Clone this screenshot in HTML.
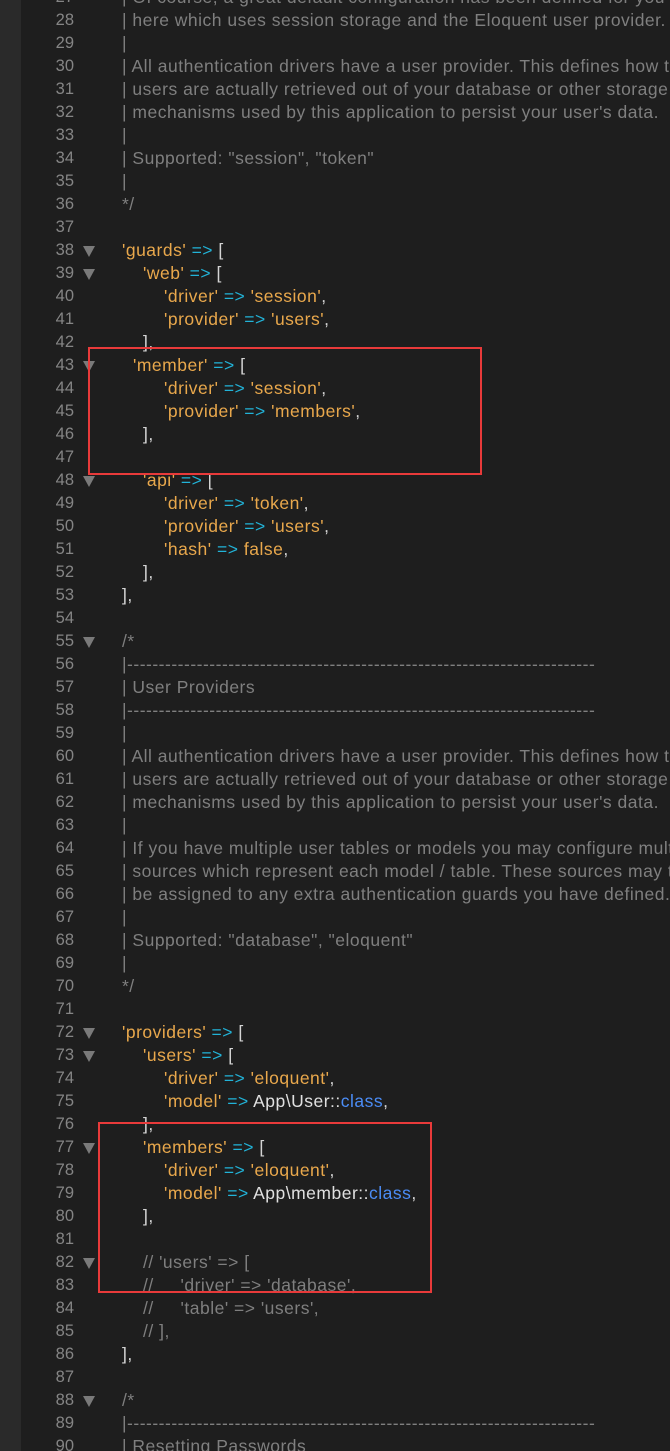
<!DOCTYPE html>
<html><head><meta charset="utf-8"><style>
html,body{overflow:hidden}
body{margin:0;width:670px;height:1451px;background:#1e1e1e;position:relative;font-family:"Liberation Sans",sans-serif;font-size:17.5px;letter-spacing:0.5px}
.g{position:absolute;left:0;top:0;width:21px;height:1451px;background:#2a2a2a}
.l{position:absolute;left:0;height:23px;line-height:23px;white-space:pre;width:670px;overflow:hidden}
.n{position:absolute;right:596px;color:#858585;text-align:right;font-size:16.5px;letter-spacing:0}
.f{position:absolute;left:83px;top:7px;width:0;height:0;border-left:6px solid transparent;border-right:6px solid transparent;border-top:11px solid #7a7a7a}
.c{position:absolute;color:#7f7f7f}
.s{color:#e9a84c}.o{color:#22b3d8}.p{color:#d4d4d4}.k{color:#4b8cf5}.w{color:#e0e0e0}
.box{position:absolute;border:2px solid #e83a3a}
</style></head><body>
<div class="g"></div>
<div id="c"></div>
<div class="box" style="left:88px;top:347px;width:390px;height:124px"></div>
<div class="box" style="left:98px;top:1122px;width:330px;height:167px"></div>
<script>
const L={
27:[0,'c','| Of course, a great default configuration has been defined for you'],
28:[0,'c','| here which uses session storage and the Eloquent user provider.'],
29:[0,'c','|'],
30:[0,'c','| All authentication drivers have a user provider. This defines how the'],
31:[0,'c','| users are actually retrieved out of your database or other storage'],
32:[0,'c','| mechanisms used by this application to persist your user\'s data.'],
33:[0,'c','|'],34:[0,'c','| Supported: "session", "token"'],35:[0,'c','|'],36:[0,'c','*/'],
38:[0,'h',"<span class=s>'guards'</span> <span class=o>=&gt;</span> <span class=p>[</span>"],
39:[21,'h',"<span class=s>'web'</span> <span class=o>=&gt;</span> <span class=p>[</span>"],
40:[42,'h',"<span class=s>'driver'</span> <span class=o>=&gt;</span> <span class=s>'session'</span><span class=p>,</span>"],
41:[42,'h',"<span class=s>'provider'</span> <span class=o>=&gt;</span> <span class=s>'users'</span><span class=p>,</span>"],
42:[21,'h',"<span class=p>],</span>"],
43:[11,'h',"<span class=s>'member'</span> <span class=o>=&gt;</span> <span class=p>[</span>"],
44:[42,'h',"<span class=s>'driver'</span> <span class=o>=&gt;</span> <span class=s>'session'</span><span class=p>,</span>"],
45:[42,'h',"<span class=s>'provider'</span> <span class=o>=&gt;</span> <span class=s>'members'</span><span class=p>,</span>"],
46:[21,'h',"<span class=p>],</span>"],
48:[21,'h',"<span class=s>'api'</span> <span class=o>=&gt;</span> <span class=p>[</span>"],
49:[42,'h',"<span class=s>'driver'</span> <span class=o>=&gt;</span> <span class=s>'token'</span><span class=p>,</span>"],
50:[42,'h',"<span class=s>'provider'</span> <span class=o>=&gt;</span> <span class=s>'users'</span><span class=p>,</span>"],
51:[42,'h',"<span class=s>'hash'</span> <span class=o>=&gt;</span> <span class=s>false</span><span class=p>,</span>"],
52:[21,'h',"<span class=p>],</span>"],53:[0,'h',"<span class=p>],</span>"],
55:[0,'c','/*'],56:[0,'c','|'+'-'.repeat(74)],57:[0,'c','| User Providers'],58:[0,'c','|'+'-'.repeat(74)],59:[0,'c','|'],
60:[0,'c','| All authentication drivers have a user provider. This defines how the'],
61:[0,'c','| users are actually retrieved out of your database or other storage'],
62:[0,'c','| mechanisms used by this application to persist your user\'s data.'],
63:[0,'c','|'],
64:[0,'c','| If you have multiple user tables or models you may configure multiple'],
65:[0,'c','| sources which represent each model / table. These sources may then'],
66:[0,'c','| be assigned to any extra authentication guards you have defined.'],
67:[0,'c','|'],68:[0,'c','| Supported: "database", "eloquent"'],69:[0,'c','|'],70:[0,'c','*/'],
72:[0,'h',"<span class=s>'providers'</span> <span class=o>=&gt;</span> <span class=p>[</span>"],
73:[21,'h',"<span class=s>'users'</span> <span class=o>=&gt;</span> <span class=p>[</span>"],
74:[42,'h',"<span class=s>'driver'</span> <span class=o>=&gt;</span> <span class=s>'eloquent'</span><span class=p>,</span>"],
75:[42,'h',"<span class=s>'model'</span> <span class=o>=&gt;</span> <span class=w>App\\User::</span><span class=k>class</span><span class=p>,</span>"],
76:[21,'h',"<span class=p>],</span>"],
77:[21,'h',"<span class=s>'members'</span> <span class=o>=&gt;</span> <span class=p>[</span>"],
78:[42,'h',"<span class=s>'driver'</span> <span class=o>=&gt;</span> <span class=s>'eloquent'</span><span class=p>,</span>"],
79:[42,'h',"<span class=s>'model'</span> <span class=o>=&gt;</span> <span class=w>App\\member::</span><span class=k>class</span><span class=p>,</span>"],
80:[21,'h',"<span class=p>],</span>"],
82:[21,'c',"// 'users' => ["],83:[21,'c',"//     'driver' => 'database',"],84:[21,'c',"//     'table' => 'users',"],85:[21,'c',"// ],"],
86:[0,'h',"<span class=p>],</span>"],
88:[0,'c','/*'],89:[0,'c','|'+'-'.repeat(74)],90:[0,'c','| Resetting Passwords']};
const F=[38,39,43,48,55,72,73,77,82,88];
let h='';
for(let n=27;n<=90;n++){
 const t=23*(n-27)-14;
 h+=`<div class="l" style="top:${t}px"><span class="n">${n}</span>`;
 if(F.includes(n))h+='<div class="f"></div>';
 const d=L[n];
 if(d){
  if(d[1]=='c'){const e=document.createElement('span');e.textContent=d[2];h+=`<span class="c" style="left:${122+d[0]}px">${e.innerHTML}</span>`;}
  else h+=`<span style="position:absolute;left:${122+d[0]}px">${d[2]}</span>`;
 }
 h+='</div>';
}
document.getElementById('c').innerHTML=h;
</script>
</body></html>
